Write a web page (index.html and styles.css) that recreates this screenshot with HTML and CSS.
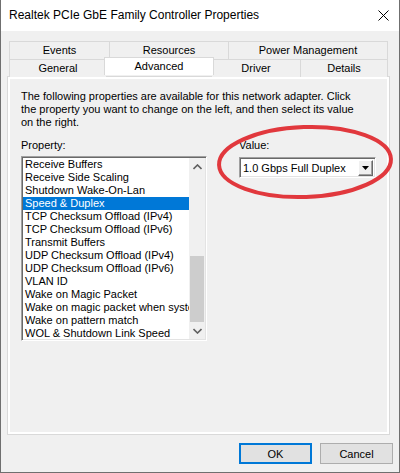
FILE: index.html
```html
<!DOCTYPE html>
<html lang="en">
<head>
  <meta charset="UTF-8" />
  <title>Realtek PCIe GbE Family Controller Properties</title>
  <link rel="stylesheet" href="styles.css">
</head>
<body>
  <div class="window">
    <div class="titlebar">
      <span class="title">Realtek PCIe GbE Family Controller Properties</span>
      <svg class="close" width="11" height="11" viewBox="0 0 11 11">
        <path d="M0.5 0.5 L10.5 10.5 M10.5 0.5 L0.5 10.5" stroke="#000" stroke-width="1" fill="none"/>
      </svg>
    </div>

    <div class="body">
      <div class="tabs">
        <div class="tabrow back">
          <div class="tab t-events">Events</div>
          <div class="tab t-resources">Resources</div>
          <div class="tab t-power">Power Management</div>
        </div>
        <div class="tabrow front">
          <div class="tab t-general">General</div>
          <div class="tab t-advanced active">Advanced</div>
          <div class="tab t-driver">Driver</div>
          <div class="tab t-details">Details</div>
        </div>
      </div>

      <div class="page">
        <div class="page-inner">
          <p class="desc">The following properties are available for this network adapter. Click<br>the property you want to change on the left, and then select its value<br>on the right.</p>
          <div class="columns">
            <div class="col-left">
              <div class="label">Property:</div>
              <div class="listbox">
                <ul class="items">
                  <li>Receive Buffers</li>
                  <li>Receive Side Scaling</li>
                  <li>Shutdown Wake-On-Lan</li>
                  <li class="selected">Speed &amp; Duplex</li>
                  <li>TCP Checksum Offload (IPv4)</li>
                  <li>TCP Checksum Offload (IPv6)</li>
                  <li>Transmit Buffers</li>
                  <li>UDP Checksum Offload (IPv4)</li>
                  <li>UDP Checksum Offload (IPv6)</li>
                  <li>VLAN ID</li>
                  <li>Wake on Magic Packet</li>
                  <li>Wake on magic packet when system is in sleep</li>
                  <li>Wake on pattern match</li>
                  <li>WOL &amp; Shutdown Link Speed</li>
                </ul>
                <div class="scrollbar">
                  <div class="sb-btn">
                    <svg width="9" height="6" viewBox="0 0 9 6"><path d="M0.5 5 L4.5 1 L8.5 5" stroke="#606060" stroke-width="1.6" fill="none"/></svg>
                  </div>
                  <div class="sb-track">
                    <div class="sb-thumb"></div>
                  </div>
                  <div class="sb-btn">
                    <svg width="9" height="6" viewBox="0 0 9 6"><path d="M0.5 1 L4.5 5 L8.5 1" stroke="#606060" stroke-width="1.6" fill="none"/></svg>
                  </div>
                </div>
              </div>
            </div>
            <div class="col-right">
              <div class="label">Value:</div>
              <div class="combo">
                <span class="combo-text">1.0 Gbps Full Duplex</span>
                <div class="combo-btn">
                  <svg width="7" height="4" viewBox="0 0 7 4"><path d="M0 0 H7 L3.5 4 Z" fill="#000"/></svg>
                </div>
              </div>
            </div>
          </div>
        </div>
      </div>

      <div class="buttons">
        <button class="btn default">OK</button>
        <button class="btn">Cancel</button>
      </div>
    </div>

    <svg class="circle" width="400" height="473" viewBox="0 0 400 473">
      <ellipse cx="305" cy="162" rx="86" ry="35" fill="none" stroke="#e1383d" stroke-width="4" transform="rotate(-2 305 162)"/>
    </svg>
  </div>
</body>
</html>
```

FILE: styles.css
```css
* {
  margin: 0;
  padding: 0;
  box-sizing: border-box;
}
body {
  font-family: 'Liberation Sans', Arial, sans-serif;
  font-size: 11px;
  color: #000;
  background: #f0f0f0;
}
.window {
  position: relative;
  width: 400px;
  height: 473px;
  border-left: 1px solid #6f6f6f;
  border-right: 1px solid #6f6f6f;
  border-bottom: 1px solid #6f6f6f;
  background: #f0f0f0;
  overflow: hidden;
}
.titlebar {
  height: 31px;
  background: #fff;
  display: flex;
  align-items: center;
  justify-content: space-between;
  padding: 0 10px 1px 8px;
}
.title {
  font-family: 'Liberation Sans', Arial, sans-serif;
  font-size: 12px;
  color: #000;
}
.close {
  display: block;
}

/* body */
.body {
  padding-top: 10px;
}
.tabs {
  margin-left: 8px;
  width: 379px;
}
.tabrow {
  display: flex;
}
.tab {
  background: #f0f0f0;
  border: 1px solid #d9d9d9;
  border-right: none;
  text-align: center;
  line-height: 17px;
  color: #000;
}
.tabrow .tab:last-child {
  border-right: 1px solid #d9d9d9;
}
.tabrow.back .tab {
  height: 18px;
  border-bottom: none;
}
.tabrow.front .tab {
  height: 18px;
  border-bottom: none;
}
.tabrow.front {
  position: relative;
  z-index: 2;
}
.t-events { width: 100px; }
.t-resources { width: 119px; }
.t-power { width: 160px; }
.t-general { width: 97px; }
.t-advanced { width: 106px; }
.t-driver { width: 88px; }
.t-details { width: 88px; }
.tab.active {
  background: #fff;
  margin: -2px -2px 0 -2px;
  width: 110px;
  height: 21px;
  line-height: 16px;
  border-right: 1px solid #d9d9d9;
  position: relative;
  z-index: 3;
}
.tab.active + .tab {
  border-left: none;
}

/* page */
.page {
  margin-left: 6px;
  width: 383px;
  height: 359px;
  border: 1px solid #d9d9d9;
  background: #fff;
  padding: 2px;
  margin-top: -1px;
}
.page-inner {
  background: #f0f0f0;
  height: 100%;
  padding: 11px 11px;
}
.desc {
  line-height: 13px;
}
.columns {
  display: flex;
  margin-top: 10px;
}
.label {
  line-height: 13px;
}
.col-left .listbox {
  margin-top: 4px;
}
.col-right {
  margin-left: 32px;
}
.col-right .combo {
  margin-top: 5px;
}

/* list */
.listbox {
  width: 186px;
  height: 185px;
  border: 1px solid;
  border-color: #a0a0a0 #fff #fff #a0a0a0;
  box-shadow: inset 1px 1px 0 #696969, inset -1px -1px 0 #e3e3e3;
  background: #fff;
  display: flex;
  padding: 1px;
}
.items {
  list-style: none;
  flex: 1;
  overflow: hidden;
}
.items li {
  height: 13px;
  line-height: 13px;
  padding-left: 2px;
  white-space: nowrap;
  overflow: hidden;
  text-overflow: clip;
}
.items li.selected {
  background: #0078d7;
  color: #fff;
}
.scrollbar {
  width: 16px;
  background: #f0f0f0;
  display: flex;
  flex-direction: column;
}
.sb-btn {
  height: 17px;
  display: flex;
  align-items: center;
  justify-content: center;
}
.sb-track {
  flex: 1;
  display: flex;
  flex-direction: column;
  justify-content: flex-end;
}
.sb-thumb {
  height: 66px;
  background: #cdcdcd;
  margin: 0 1px;
}

/* combo */
.combo {
  width: 137px;
  height: 21px;
  border: 1px solid;
  border-color: #a0a0a0 #fff #fff #a0a0a0;
  box-shadow: inset 1px 1px 0 #696969, inset -1px -1px 0 #e3e3e3;
  background: #fff;
  display: flex;
  align-items: center;
  justify-content: space-between;
  padding: 2px 2px 2px 3px;
}
.combo-btn {
  width: 15px;
  height: 16px;
  background: #f0f0f0;
  border: 1px solid;
  border-color: #fff #696969 #696969 #fff;
  box-shadow: inset -1px -1px 0 #a0a0a0;
  display: flex;
  align-items: center;
  justify-content: center;
}
.combo-btn svg {
  display: block;
}

/* buttons */
.buttons {
  display: flex;
  justify-content: flex-end;
  gap: 8px;
  padding: 8px 6px 0 0;
}
.btn {
  width: 73px;
  height: 21px;
  font-family: 'Liberation Sans', Arial, sans-serif;
  font-size: 11px;
  color: #000;
  background: #e1e1e1;
  border: 1px solid #adadad;
}
.btn.default {
  border: 2px solid #0078d7;
}

.circle {
  position: absolute;
  left: -1px;
  top: 0;
  pointer-events: none;
}
```
